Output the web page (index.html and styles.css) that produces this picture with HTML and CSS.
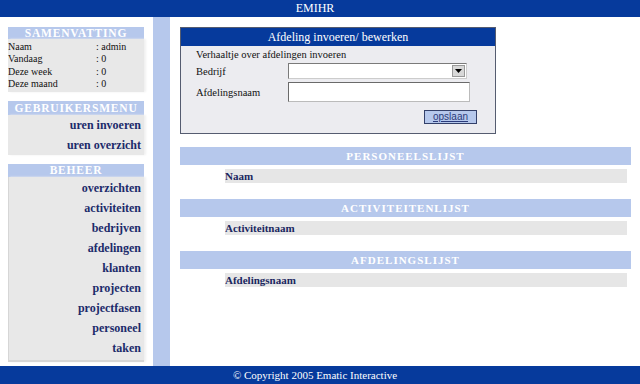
FILE: index.html
```html
<!DOCTYPE html>
<html>
<head>
<meta charset="utf-8">
<link rel="stylesheet" href="styles.css">
</head>
<body>
<div class="page">
  <header class="topbar">EMIHR</header>
  <div class="middle">
    <aside class="side">
      <section class="box">
        <h2 class="box-head h12">SAMENVATTING</h2>
        <div class="box-body summary">
          <span>Naam</span><span>: admin</span>
          <span>Vandaag</span><span>: 0</span>
          <span>Deze week</span><span>: 0</span>
          <span>Deze maand</span><span>: 0</span>
        </div>
      </section>
      <section class="box">
        <h2 class="box-head h14">GEBRUIKERSMENU</h2>
        <nav class="box-body links">
          <a>uren invoeren</a>
          <a>uren overzicht</a>
        </nav>
      </section>
      <section class="box">
        <h2 class="box-head">BEHEER</h2>
        <nav class="box-body links framed">
          <a>overzichten</a>
          <a>activiteiten</a>
          <a>bedrijven</a>
          <a>afdelingen</a>
          <a>klanten</a>
          <a>projecten</a>
          <a>projectfasen</a>
          <a>personeel</a>
          <a>taken</a>
        </nav>
      </section>
    </aside>
    <div class="stripe"></div>
    <main class="main">
      <form class="panel">
        <div class="panel-head">Afdeling invoeren/ bewerken</div>
        <div class="panel-body">
          <div class="intro">Verhaaltje over afdelingen invoeren</div>
          <div class="row">
            <label>Bedrijf</label>
            <div class="select"><span class="arrow"><svg width="7" height="4" viewBox="0 0 7 4"><path d="M0 0H7L3.5 4Z" fill="#000"/></svg></span></div>
          </div>
          <div class="row">
            <label>Afdelingsnaam</label>
            <div class="input"></div>
          </div>
          <div class="actions"><span class="btn">opslaan</span></div>
        </div>
      </form>
      <section class="list">
        <h3 class="list-head">PERSONEELSLIJST</h3>
        <div class="list-row">Naam</div>
      </section>
      <section class="list">
        <h3 class="list-head">ACTIVITEITENLIJST</h3>
        <div class="list-row">Activiteitnaam</div>
      </section>
      <section class="list">
        <h3 class="list-head">AFDELINGSLIJST</h3>
        <div class="list-row">Afdelingsnaam</div>
      </section>
    </main>
  </div>
  <footer class="footbar">© Copyright 2005 Ematic Interactive</footer>
</div>
</body>
</html>
```
FILE: styles.css
```css
* { box-sizing: border-box; }
html, body { margin: 0; padding: 0; }
body {
  width: 640px;
  height: 384px;
  overflow: hidden;
  font-family: "Liberation Serif", "Times New Roman", serif;
  background: #fff;
}
.page {
  display: flex;
  flex-direction: column;
  height: 384px;
}
.topbar {
  flex: 0 0 17px;
  background: #063a9c;
  color: #fff;
  font-size: 12px;
  line-height: 17px;
  text-align: center;
  padding-right: 10px;
}
.middle {
  flex: 0 0 349px;
  display: flex;
  overflow: hidden;
}
.side {
  width: 153px;
  padding: 10px 9px 0 8px;
  display: flex;
  flex-direction: column;
  gap: 9px;
}
.box { margin: 0; }
.box-head {
  margin: 0;
  height: 13px;
  background: #b6c8ec;
  color: #fff;
  font-size: 11.5px;
  font-weight: bold;
  line-height: 13px;
  letter-spacing: 0.8px;
  text-align: center;
}
.box-head.h12 { height: 12px; line-height: 12px; }
.box-head.h14 { height: 14px; line-height: 14px; }
.box-body {
  background: #e8e8e8;
  box-shadow: 2px 0 2px #f0f0f0;
}
.summary {
  display: grid;
  grid-template-columns: 88px 1fr;
  font-size: 10px;
  line-height: 12.3px;
  color: #111;
  padding: 2px 0 2px 0;
}
.links {
  display: flex;
  flex-direction: column;
  align-items: flex-end;
  padding: 0 3px 0 6px;
}
.links a {
  font-size: 12px;
  font-weight: bold;
  color: #1c2b6b;
  line-height: 20px;
}
.framed {
  border-left: 1px solid #d6d6d6;
  border-bottom: 2px solid #d6d6d6;
  padding-top: 1px;
  padding-bottom: 2px;
}
.stripe {
  width: 17px;
  background: #b6c8ec;
}
.main {
  flex: 1;
  padding: 10px 9px 0 10px;
}
.panel {
  width: 316px;
  border: 1px solid #555c70;
  background: #ececf0;
  margin: 0 0 13px 0;
}
.panel-head {
  height: 18px;
  background: #063a9c;
  color: #fff;
  font-size: 12px;
  line-height: 18px;
  text-align: center;
}
.panel-body {
  padding: 3px 0 9px 15px;
  font-size: 10.5px;
  color: #111;
}
.intro { line-height: 12px; margin-bottom: 2px; }
.row {
  display: grid;
  grid-template-columns: 92px 1fr;
  align-items: center;
  margin-bottom: 3px;
}
.select {
  width: 179px;
  height: 16px;
  border: 1px solid #7a7a7a;
  border-right-color: #ccc;
  border-bottom-color: #ccc;
  background: #fff;
  display: flex;
  justify-content: flex-end;
  padding: 1px;
}
.arrow {
  width: 13px;
  height: 12px;
  background: #d8d8d8;
  border: 1px solid #999;
  display: flex;
  align-items: center;
  justify-content: center;
}
.input {
  width: 182px;
  height: 20px;
  border: 1px solid #6a6a6a;
  border-right-color: #bbb;
  border-bottom-color: #bbb;
  background: #fff;
}
.actions {
  display: flex;
  justify-content: flex-end;
  padding-right: 18px;
  margin-top: 8px;
}
.btn {
  width: 53px;
  height: 14px;
  border: 1px solid #33406a;
  background: #b6c8ec;
  color: #2a3a7a;
  font-family: "Liberation Sans", Arial, sans-serif;
  font-size: 10px;
  line-height: 12px;
  text-align: center;
  text-decoration: underline;
}
.list {
  width: 451px;
  margin-bottom: 16px;
}
.list-head {
  margin: 0;
  height: 18px;
  background: #b6c8ec;
  color: #fff;
  font-size: 11px;
  font-weight: bold;
  letter-spacing: 1px;
  line-height: 18px;
  text-align: center;
}
.list-row {
  margin: 4px 4px 0 45px;
  height: 14px;
  background: #e6e6e6;
  color: #1a2660;
  font-size: 11px;
  font-weight: bold;
  line-height: 14px;
}
.footbar {
  flex: 0 0 18px;
  background: #063a9c;
  color: #fff;
  font-size: 11px;
  line-height: 18px;
  text-align: center;
  padding-right: 10px;
}
```
